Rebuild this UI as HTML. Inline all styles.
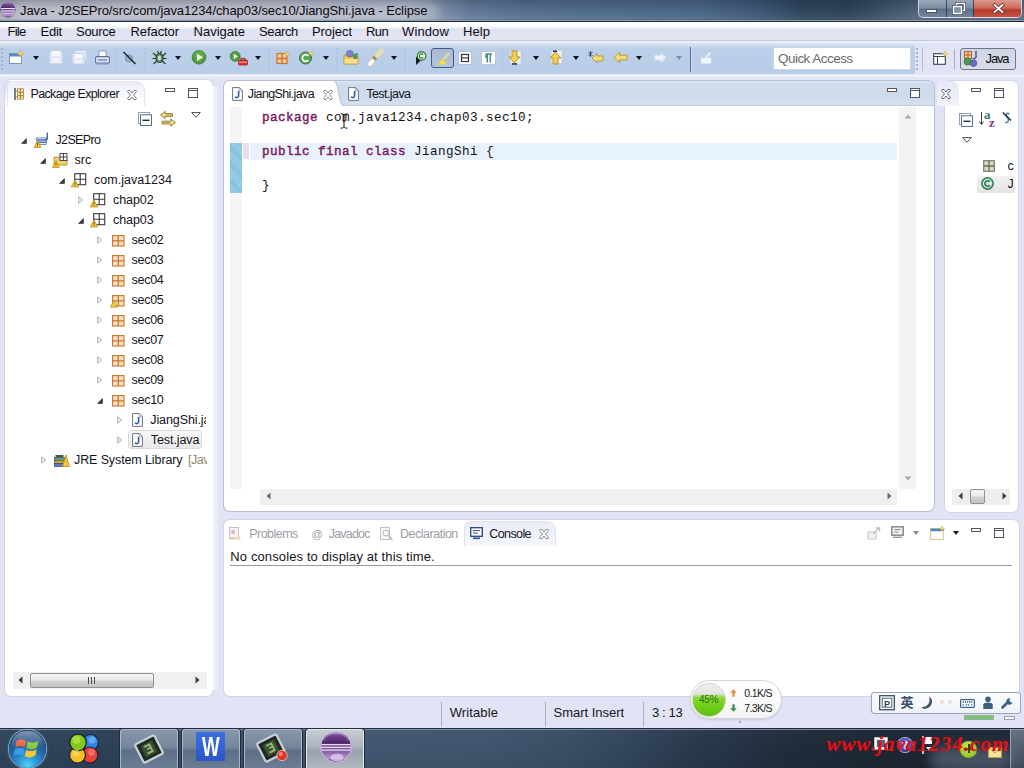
<!DOCTYPE html>
<html lang="en">
<head>
<meta charset="utf-8">
<title>Java - J2SEPro/src/com/java1234/chap03/sec10/JiangShi.java - Eclipse</title>
<style>
html,body{margin:0;padding:0;}
body{width:1024px;height:768px;overflow:hidden;position:relative;background:#e2e4f5;font-family:"Liberation Sans","Noto Sans CJK SC",sans-serif;font-size:12.5px;color:#111;}
.a{position:absolute;}
.t{position:absolute;white-space:pre;line-height:16px;height:16px;}
svg{position:absolute;overflow:visible;}
#titlebar{left:0;top:0;width:1024px;height:21px;background:linear-gradient(90deg,#abaebc 0,#a8acbc 300px,#9fa5b9 405px,#8391ab 437px,#647a98 470px,#56718f 520px,#506b8c 600px,#4b6788 700px,#3d5774 760px,#2f465e 800px,#2d435a 850px,#3a5068 880px,#4f6279 915px,#55677d 1024px);}
#titleshade{left:0;top:0;width:1024px;height:21px;background:linear-gradient(180deg,rgba(10,20,40,.22) 0,rgba(10,20,40,.08) 35%,rgba(255,255,255,.04) 75%,rgba(255,255,255,.08) 90%,rgba(0,0,0,.25) 100%);}
#menubar{left:0;top:20px;width:1024px;height:23px;background:linear-gradient(180deg,#8fa1b8 0,#8fa1b8 1px,#1f2a38 1px,#1f2a38 2px,#ffffff 2px,#fdfdfe 6px,#f0f1f9 8px,#dcdfee 9.5px,#e1e3f3 11px,#e3e5f5 19.5px,#c4cad9 20px,#c4cad9 21px,#e9f2fb 21px,#e4eef9 23px);}
#toolbar{left:0;top:43px;width:915px;height:31px;background:linear-gradient(180deg,#dde9f5 0,#c8d9ec 3px,#bccfe8 6px,#b8cde7 100%);}
.panel{position:absolute;background:#fff;border-radius:6px;box-shadow:0 0 0 1px rgba(185,190,215,.4);}
.kw{color:#7f0055;font-weight:bold;}
.tbtn{position:absolute;top:729px;width:58px;height:40px;box-sizing:border-box;border:1px solid rgba(190,203,220,.75);border-radius:3px 3px 0 0;background:linear-gradient(180deg,#8797ab 0,#75879c 45%,#5d6f87 55%,#6b7d95 100%);box-shadow:0 0 0 1px #1f2b3a;}
.sep{position:absolute;width:1px;background:#a3a6b8;}
.dd{position:absolute;width:0;height:0;border-left:3.5px solid transparent;border-right:3.5px solid transparent;border-top:4px solid #1a1a2a;}
</style>
</head>
<body>
<div class="a" id="titlebar"></div><div class="a" id="titleshade"></div>
<svg style="left:0px;top:2px" width="16" height="16" viewBox="0 0 16 16"><circle cx="8" cy="8" r="7.5" fill="#5b4a8a"/><circle cx="8" cy="8" r="7.5" fill="url(#eg)"/><rect x="1" y="6" width="14" height="1.2" fill="#e8e0f5"/><rect x="1" y="8.4" width="14" height="1.2" fill="#e8e0f5"/><rect x="1.5" y="10.8" width="13" height="1" fill="#d8cfee"/></svg>
<div class="a" style="left:14px;top:2px;width:425px;height:18px;border-radius:9px;background:rgba(255,255,255,.26);filter:blur(4px)"></div>
<div class="a" style="left:918px;top:0;width:104px;height:18px;border:1px solid rgba(225,232,242,.8);border-top:none;border-radius:0 0 5px 5px;box-sizing:border-box;overflow:hidden;background:linear-gradient(180deg,#9aa7ba 0,#7f8ea5 45%,#5e6f88 55%,#76869c 100%)"><div class="a" style="left:27px;top:0;width:1px;height:18px;background:rgba(30,40,55,.7)"></div><div class="a" style="left:54px;top:0;width:1px;height:18px;background:rgba(30,40,55,.7)"></div><div class="a" style="left:55px;top:0;width:49px;height:18px;background:linear-gradient(180deg,#dc9a8e 0,#cf6a58 45%,#b8372a 55%,#c9594a 100%)"></div><div class="a" style="left:7px;top:9px;width:11px;height:3px;background:#fff;border:1px solid #4a5568;box-sizing:border-box;height:4px"></div><svg style="left:33px;top:2px" width="14" height="12" viewBox="0 0 14 12"><rect x="4.5" y="1.5" width="8" height="7" fill="none" stroke="#4a5568" stroke-width="3"/><rect x="4.5" y="1.5" width="8" height="7" fill="none" stroke="#fff" stroke-width="1.4"/><rect x="1.5" y="4.5" width="8" height="7" fill="#7f8ea5" stroke="#4a5568" stroke-width="3"/><rect x="1.5" y="4.5" width="8" height="7" fill="#8090a6" stroke="#fff" stroke-width="1.4"/></svg><svg style="left:74px;top:3.5px" width="11" height="9" viewBox="0 0 14 11"><path d="M2 1 L12 10 M12 1 L2 10" stroke="#5a2a25" stroke-width="4.2" stroke-linecap="square"/><path d="M2 1 L12 10 M12 1 L2 10" stroke="#fff" stroke-width="2.4" stroke-linecap="square"/></svg></div>
<div class="a" id="menubar"></div>
<div class="a" id="toolbar"></div>
<div class="a" style="left:0;top:74px;width:1024px;height:4px;background:linear-gradient(180deg,#dfe6f4 0,#eef0fa 1px,#eceef9 2.5px,#e2e4f5 4px)"></div>
<div class="a" style="left:1px;top:48px;width:2px;height:22px;background:repeating-linear-gradient(180deg,#9fb2cf 0 2px,transparent 2px 4px)"></div>
<svg style="left:9px;top:50px" width="15" height="15" viewBox="0 0 15 15"><rect x="0.5" y="3.5" width="12" height="10" fill="#fff" stroke="#7f93b3"/><rect x="1" y="4" width="11" height="2.5" fill="#5f86c5"/><path d="M11.5 0 L12.5 2.5 L15 3.5 L12.5 4.5 L11.5 7 L10.5 4.5 L8 3.5 L10.5 2.5Z" fill="#f3d65a" stroke="#c9a63a" stroke-width=".4"/></svg>
<div class="dd" style="left:33px;top:56px;border-top-color:#10101c"></div>
<svg style="left:49px;top:50px" width="14" height="14" viewBox="0 0 14 14"><rect x="0.5" y="0.5" width="13" height="13" rx="1" fill="#dfe7f3" stroke="#c8d3e6"/><rect x="3" y="1" width="8" height="5" fill="#f6f8fc"/><rect x="3" y="8" width="8" height="5" fill="#eef2f9"/></svg>
<svg style="left:72px;top:50px" width="15" height="14" viewBox="0 0 15 14"><rect x="2.5" y="0.5" width="12" height="10" rx="1" fill="#e3eaf4" stroke="#c8d3e6"/><rect x="0.5" y="3.5" width="12" height="10" rx="1" fill="#dfe7f3" stroke="#c8d3e6"/><rect x="3" y="4" width="7" height="4" fill="#f6f8fc"/><rect x="3" y="9.5" width="7" height="4" fill="#eef2f9"/></svg>
<svg style="left:95px;top:50px" width="15" height="15" viewBox="0 0 15 15"><rect x="4" y="1" width="7" height="6" fill="#fff" stroke="#7a8fb8" stroke-width=".8"/><rect x="0.6" y="6.6" width="13.8" height="6.4" rx="1" fill="#dfe6f3" stroke="#5a6fa0" stroke-width="1.1"/><rect x="3" y="9" width="9" height="2" fill="#8ea3c9"/><rect x="1" y="13.5" width="13" height="1" fill="#7f93b3"/></svg>
<div class="a" style="left:115px;top:48px;width:2px;height:22px;background:repeating-linear-gradient(180deg,#b3c4e0 0 2px,transparent 2px 4px)"></div>
<svg style="left:121px;top:50px" width="16" height="15" viewBox="0 0 16 15"><circle cx="8" cy="8.5" r="3.6" fill="#9fb0c8" stroke="#7d8fa9" stroke-width="1"/><path d="M2.5 2 L14.5 14" stroke="#1c2230" stroke-width="1.5"/></svg>
<div class="a" style="left:144px;top:48px;width:2px;height:22px;background:repeating-linear-gradient(180deg,#b3c4e0 0 2px,transparent 2px 4px)"></div>
<svg style="left:152px;top:50px" width="15" height="15" viewBox="0 0 15 15"><ellipse cx="7.5" cy="8" rx="3.6" ry="4.4" fill="#5f8a62" stroke="#1f3a28" stroke-width="1"/><path d="M1 3 L4.5 6 M14 3 L10.5 6 M0.5 8.5 L4 8.5 M11 8.5 L14.5 8.5 M1.5 14 L4.8 11 M13.5 14 L10.2 11 M5.5 1 L6.8 3.8 M9.5 1 L8.2 3.8" stroke="#1f3a28" stroke-width="1.1" fill="none"/><ellipse cx="7.5" cy="8" rx="1.6" ry="2.4" fill="#cfe3c9"/></svg>
<div class="dd" style="left:175px;top:56px;border-top-color:#10101c"></div>
<svg style="left:192px;top:50px" width="14" height="15" viewBox="0 0 14 15"><circle cx="7" cy="7.3" r="6.8" fill="#4f9a3e" stroke="#3a7a30" stroke-width=".8"/><circle cx="7" cy="6" r="5" fill="#6db658" opacity=".6"/><path d="M5 3.5 L11 7.3 L5 11.2Z" fill="#e9f7dc"/></svg>
<div class="dd" style="left:215px;top:56px;border-top-color:#10101c"></div>
<svg style="left:230px;top:51px" width="18" height="15" viewBox="0 0 18 15"><circle cx="5.2" cy="5.4" r="5" fill="#4f9a3e" stroke="#3a7a30" stroke-width=".7"/><path d="M3.6 2.6 L8.2 5.4 L3.6 8.2Z" fill="#e9f7dc"/><rect x="8.5" y="9" width="9" height="5" rx=".8" fill="#d8342a" stroke="#9b1f1a" stroke-width=".7"/><rect x="11" y="7.4" width="4" height="2" fill="none" stroke="#9b1f1a" stroke-width=".9"/><rect x="9" y="10.6" width="8" height="1" fill="#f2b8a8"/></svg>
<div class="dd" style="left:255px;top:56px;border-top-color:#10101c"></div>
<div class="a" style="left:268px;top:48px;width:2px;height:22px;background:repeating-linear-gradient(180deg,#b3c4e0 0 2px,transparent 2px 4px)"></div>
<svg style="left:276px;top:51px" width="14" height="13" viewBox="0 0 14 13"><rect x="1" y="2.5" width="10" height="10" fill="#f4c89a" stroke="#c9762e" stroke-width="1.2"/><path d="M6 2.5 V12.5 M1 7.5 H11" stroke="#c9762e" stroke-width="1.3"/><path d="M11 0 L11.9 2 L14 2.8 L11.9 3.6 L11 5.8 L10.1 3.6 L8 2.8 L10.1 2Z" fill="#f6de6a" stroke="#c9a63a" stroke-width=".4"/></svg>
<svg style="left:299px;top:51px" width="15" height="14" viewBox="0 0 15 14"><circle cx="6.5" cy="7" r="6" fill="#58a05a" stroke="#2f7a3c" stroke-width="1"/><path d="M9.3 4.8 A3.4 3.4 0 1 0 9.3 9.2" fill="none" stroke="#eefaea" stroke-width="1.9"/><path d="M12 0 L12.8 1.8 L14.8 2.5 L12.8 3.2 L12 5 L11.2 3.2 L9.2 2.5 L11.2 1.8Z" fill="#f6de6a" stroke="#c9a63a" stroke-width=".4"/></svg>
<div class="dd" style="left:323px;top:56px;border-top-color:#10101c"></div>
<div class="a" style="left:336px;top:48px;width:2px;height:22px;background:repeating-linear-gradient(180deg,#b3c4e0 0 2px,transparent 2px 4px)"></div>
<svg style="left:343px;top:49px" width="16" height="16" viewBox="0 0 16 16"><path d="M1 6 H6 L7.5 7.5 H15 V15 H1Z" fill="#f0c94e" stroke="#b8922e" stroke-width=".9"/><path d="M1.5 10 H14.5 V14.5 H1.5Z" fill="#f8e08a"/><circle cx="6.8" cy="4.8" r="3.4" fill="#7d80c4" stroke="#5a5fa6" stroke-width=".6"/><path d="M10 5 L15 4 L14 10 L10.5 10Z" fill="#4f9a5a"/></svg>
<svg style="left:368px;top:50px" width="16" height="15" viewBox="0 0 16 15"><path d="M2 14 L11 3" stroke="#c9b48a" stroke-width="4.6" stroke-linecap="round"/><path d="M2 14 L4.5 11" stroke="#fff" stroke-width="4" stroke-linecap="round"/><path d="M9 5.5 L13.5 1" stroke="#e8dcb8" stroke-width="5.2" stroke-linecap="round"/><path d="M6 9 L7.5 7.3" stroke="#a8895a" stroke-width="4.4"/></svg>
<div class="dd" style="left:391px;top:56px;border-top-color:#10101c"></div>
<div class="a" style="left:404px;top:48px;width:2px;height:22px;background:repeating-linear-gradient(180deg,#b3c4e0 0 2px,transparent 2px 4px)"></div>
<svg style="left:413px;top:51px" width="14" height="15" viewBox="0 0 14 15"><circle cx="8.5" cy="5" r="4.3" fill="#eaf5e6" stroke="#3f8a4a" stroke-width="1.5"/><path d="M10.2 3.6 A2.2 2.2 0 1 0 10.2 6.4" fill="none" stroke="#2f7a3c" stroke-width="1.3"/><path d="M3 5.5 L7.5 10 L3 14Z" fill="#161c28"/><path d="M0.5 4.5 H4" stroke="#c5d2e6" stroke-width="1.4"/></svg>
<div class="a" style="left:431px;top:48px;width:23px;height:20px;box-sizing:border-box;border:1px solid #3d5c8e;border-radius:3px;background:linear-gradient(180deg,#a9b9cf 0,#b6c5da 100%)"></div>
<svg style="left:436px;top:51px" width="14" height="14" viewBox="0 0 14 14"><path d="M4 13 L13 2" stroke="#d9dfae" stroke-width="2.2"/><path d="M2 13.5 L6.5 7.5 L10.5 11 L8.5 13.5Z" fill="#ecdf4a"/><path d="M6.5 7.5 L10.5 11" stroke="#b9b98a" stroke-width="1"/></svg>
<svg style="left:458px;top:51px" width="14" height="14" viewBox="0 0 14 14"><rect x="0.5" y="0.5" width="13" height="13" fill="#fff" stroke="#8ea0bd" stroke-dasharray="1 1"/><rect x="3.5" y="3.5" width="7" height="7" fill="#fff" stroke="#2c3446" stroke-width="1.2"/><path d="M3.5 7 H10.5" stroke="#2c3446" stroke-width="1.2"/></svg>
<svg style="left:481px;top:51px" width="15" height="14" viewBox="0 0 15 14"><rect x="0.5" y="0.5" width="14" height="13" fill="#fff" stroke="#b9c6dc"/><path d="M6.3 3 V11.5 M9.3 3 V11.5 M4.5 3 H11" stroke="#4a8a86" stroke-width="1.5" fill="none"/><path d="M6.3 3 A2.2 2.2 0 0 0 6.3 7.4Z" fill="#4a8a86"/></svg>
<div class="a" style="left:501px;top:48px;width:2px;height:22px;background:repeating-linear-gradient(180deg,#b3c4e0 0 2px,transparent 2px 4px)"></div>
<svg style="left:507px;top:50px" width="15" height="15" viewBox="0 0 15 15"><rect x="3" y="1" width="11" height="13" fill="#eef1f7" stroke="#c2cde0" stroke-width=".8"/><path d="M5 1 H10 V7 H13 L7.5 13 L2 7 H5Z" fill="#f1cf52" stroke="#b98d2a" stroke-width=".9"/><rect x="5" y="13.2" width="5" height="1.5" fill="#2b3140"/></svg>
<div class="dd" style="left:533px;top:56px;border-top-color:#10101c"></div>
<svg style="left:548px;top:50px" width="15" height="15" viewBox="0 0 15 15"><rect x="3" y="0.5" width="11" height="13" fill="#eef1f7" stroke="#c2cde0" stroke-width=".8"/><path d="M5 14 H10 V8 H13 L7.5 2 L2 8 H5Z" fill="#f1cf52" stroke="#b98d2a" stroke-width=".9"/><rect x="5" y="0.5" width="4" height="1.5" fill="#2b3140"/></svg>
<div class="dd" style="left:573px;top:56px;border-top-color:#10101c"></div>
<svg style="left:588px;top:51px" width="16" height="13" viewBox="0 0 16 13"><path d="M4 7 L9 2.5 V5 H15 V10 H9 V12 Z" fill="#f3dc78" stroke="#b39436" stroke-width=".9"/><path d="M0.5 1 L4.5 5 M4.5 1 L0.5 5 M2.5 0 V6" stroke="#2b3140" stroke-width=".8"/></svg>
<svg style="left:613px;top:51px" width="15" height="13" viewBox="0 0 15 13"><path d="M0.8 6.5 L6.5 1.5 V4.2 H14 V9 H6.5 V11.7 Z" fill="#f3dc78" stroke="#b39436" stroke-width=".9"/></svg>
<div class="dd" style="left:636px;top:56px;border-top-color:#10101c"></div>
<svg style="left:654px;top:51px" width="13" height="13" viewBox="0 0 13 13"><path d="M12.3 6.5 L6.8 1.5 V4.2 H0.8 V9 H6.8 V11.7 Z" fill="#eef2f8" stroke="#d5deec" stroke-width=".8"/></svg>
<div class="dd" style="left:676px;top:56px;border-top-color:#7f8da6"></div>
<div class="a" style="left:690px;top:47px;width:1px;height:25px;background:#56688a"></div><div class="a" style="left:691px;top:47px;width:1px;height:25px;background:#d3def0"></div>
<svg style="left:700px;top:51px" width="12" height="13" viewBox="0 0 12 13"><path d="M1 7 H11 V12.5 H1Z" fill="#f2f5fa" stroke="#d9e1ee" stroke-width=".6"/><path d="M6 7 L10 1.5" stroke="#e6ecf5" stroke-width="2.4"/></svg>
<div class="a" style="left:773px;top:47px;width:138px;height:23px;box-sizing:border-box;border:1px solid #c9d6ea;background:#fff;border-radius:1px"></div>
<div class="a" style="left:916px;top:48px;width:2px;height:22px;background:repeating-linear-gradient(180deg,#9fb2d6 0 2px,transparent 2px 4px)"></div>
<div class="sep" style="left:922px;top:47px;height:24px;background:#b4b9cc"></div>
<svg style="left:933px;top:51px" width="15" height="14" viewBox="0 0 15 14"><rect x="0.7" y="2.7" width="11.6" height="10.6" fill="#fff" stroke="#3a4350" stroke-width="1.1"/><path d="M0.7 5.5 H12.3 M4.5 5.5 V13.3" stroke="#3a4350" stroke-width="1"/><path d="M12 0 L12.9 2 L15 2.8 L12.9 3.6 L12 5.8 L11.1 3.6 L9 2.8 L11.1 2Z" fill="#f6de6a" stroke="#c9a63a" stroke-width=".4"/></svg>
<div class="sep" style="left:954px;top:49px;height:20px;background:#a9aec2"></div>
<div class="a" style="left:960px;top:48px;width:56px;height:22px;box-sizing:border-box;border:1px solid #6f7888;border-radius:3px;background:linear-gradient(180deg,#cfd5e2 0,#d9dee9 100%)"></div>
<svg style="left:963px;top:50px" width="16" height="17" viewBox="0 0 16 17"><rect x="1.5" y="1.5" width="7" height="7" fill="#f4c89a" stroke="#b5612a" stroke-width="1"/><path d="M5 1.5 V8.5 M1.5 5 H8.5" stroke="#b5612a" stroke-width="1"/><path d="M13 1 V7 A2.5 2.5 0 0 1 9.5 8.5" fill="none" stroke="#4a5f9a" stroke-width="1.6"/><circle cx="4.6" cy="11.5" r="3.6" fill="#4f9a4f" stroke="#2f6f38" stroke-width=".7"/><circle cx="10.5" cy="13.2" r="3.3" fill="#6a6fc0" stroke="#474c96" stroke-width=".7"/></svg>
<div class="panel" style="left:5px;top:80px;width:207.5px;height:616px;"></div>
<div class="a" style="left:213px;top:86px;width:5px;height:604px;background:linear-gradient(90deg,#f1f2fb,#e8eaf7)"></div>
<div class="a" style="left:5px;top:80px;width:3.5px;height:22px;border-radius:6px 0 0 0;background:linear-gradient(180deg,#dcdeed 0,#e6e7f3 50%,#fff 100%)"></div>
<div class="a" style="left:7px;top:81px;width:138px;height:25px;box-sizing:border-box;border:1px solid #e4e6f3;border-bottom:none;border-radius:5px 9px 0 0;background:linear-gradient(180deg,#eaebf7 0,#f4f5fb 35%,#ffffff 80%)"></div>
<svg style="left:14px;top:88px" width="10" height="12" viewBox="0 0 10 12"><path d="M1 0 V12" stroke="#3b3b44" stroke-width="1.3"/><rect x="3.5" y="0.8" width="6" height="10.4" fill="#f3e3a8" stroke="#a98a3a" stroke-width=".8"/><path d="M3.5 4.3 H9.5 M3.5 7.7 H9.5 M6.5 0.8 V11.2 M1 3 H3.5 M1 9 H3.5" stroke="#8a6f2a" stroke-width=".8"/></svg>
<svg style="left:127px;top:89.5px" width="10" height="10" viewBox="0 0 10 10"><path d="M1 0.5 L3 0.5 L5 3 L7 0.5 L9 0.5 L9.5 1.5 L6.5 5 L9.5 8.5 L9 9.5 L7 9.5 L5 7 L3 9.5 L1 9.5 L0.5 8.5 L3.5 5 L0.5 1.5Z" fill="#fff" stroke="#6a6a74" stroke-width=".9" stroke-linejoin="round"/></svg>
<div class="a" style="left:165px;top:88px;width:10px;height:4px;box-sizing:border-box;border:1px solid #55555f;background:#fff"></div>
<div class="a" style="left:188px;top:88px;width:10px;height:10px;box-sizing:border-box;border:1px solid #55555f;background:linear-gradient(180deg,#fff 0,#fff 1px,#55555f 1px,#55555f 2px,#fff 2px)"></div>
<svg style="left:137.5px;top:112.3px" width="14" height="14" viewBox="0 0 14 14"><rect x="0.5" y="0.5" width="11" height="11" fill="#fff" stroke="#8da2bf"/><rect x="2.5" y="2.8" width="11" height="10.7" fill="#fff" stroke="#55708f"/><path d="M4.5 8.3 H11.5" stroke="#1e2c44" stroke-width="1.4"/></svg>
<svg style="left:159.5px;top:111px" width="16" height="16" viewBox="0 0 16 16"><path d="M0.6 4 L5.2 0.4 V2.6 H12.5 V5.4 H5.2 V7.6Z" fill="#f0dc82" stroke="#7a6c22" stroke-width=".8"/><path d="M15.4 11.6 L10.8 8 V10.2 H2 V13 H10.8 V15.2Z" fill="#f0dc82" stroke="#7a6c22" stroke-width=".8"/><path d="M6 4 H12 M3 11.6 H10" stroke="#8a7c32" stroke-width=".6"/></svg>
<svg style="left:191px;top:112px" width="10" height="6" viewBox="0 0 10 6"><path d="M0.7 0.6 H9.3 L5 5.3Z" fill="#fff" stroke="#4b4b55" stroke-width="1"/></svg>
<div class="a" style="left:6px;top:128px;width:200.5px;height:545px;overflow:hidden">
<svg style="left:15.3px;top:10.1px" width="6" height="6" viewBox="0 0 6 6"><path d="M5.4 0.6 V5.4 H0.6Z" fill="#3c3c44" stroke="#2a2a34" stroke-width=".7"/></svg>
<svg style="left:28.0px;top:4.3px" width="16" height="16" viewBox="0 0 16 16"><path d="M2 6 H13.5 L12 12.5 H3.5Z" fill="#e9eef8" stroke="#6d82a8" stroke-width=".9"/><path d="M3 8 H13 M3.3 10.2 H12.6" stroke="#4f74b8" stroke-width="1.4"/><path d="M13.3 0.5 V6 A2 2 0 0 1 11 7.5" fill="none" stroke="#3b5ea8" stroke-width="1.3"/><path d="M3.5 8.5 L7 15.5 H0Z" fill="#f3c93a" stroke="#b98d1a" stroke-width=".7"/><path d="M3.5 11 V13.2 M3.5 14 V14.7" stroke="#5a3c00" stroke-width=".9"/></svg>
<svg style="left:34.3px;top:30.1px" width="6" height="6" viewBox="0 0 6 6"><path d="M5.4 0.6 V5.4 H0.6Z" fill="#3c3c44" stroke="#2a2a34" stroke-width=".7"/></svg>
<svg style="left:46.0px;top:24.3px" width="17" height="16" viewBox="0 0 17 16"><path d="M2 5 H7 L8.5 6.5 H15 V13 H2Z" fill="#f0cf72" stroke="#b8922e" stroke-width=".9"/><rect x="8" y="1.5" width="7" height="7" fill="#fff" stroke="#3a3a40" stroke-width=".9"/><path d="M11.5 1.5 V8.5 M8 5 H15" stroke="#3a3a40" stroke-width=".9"/><path d="M4 8.5 L7.5 15.5 H0.5Z" fill="#f3c93a" stroke="#b98d1a" stroke-width=".7"/><path d="M4 11 V13.2 M4 14 V14.7" stroke="#5a3c00" stroke-width=".9"/></svg>
<svg style="left:53.3px;top:50.1px" width="6" height="6" viewBox="0 0 6 6"><path d="M5.4 0.6 V5.4 H0.6Z" fill="#3c3c44" stroke="#2a2a34" stroke-width=".7"/></svg>
<svg style="left:65.0px;top:45.3px" width="16" height="15" viewBox="0 0 16 15"><rect x="3.7" y="0.7" width="11" height="11" fill="#fff" stroke="#3a3a40" stroke-width="1.1"/><path d="M9.2 0.7 V11.7 M3.7 6.2 H14.7" stroke="#3a3a40" stroke-width="1.1"/><path d="M4 6.8 L7.8 14 H0.2Z" fill="#f3c93a" stroke="#b98d1a" stroke-width=".7"/><path d="M4 9.3 V11.6 M4 12.3 V13" stroke="#5a3c00" stroke-width=".9"/></svg>
<svg style="left:72.0px;top:68.3px" width="6" height="8" viewBox="0 0 6 8"><path d="M0.7 0.8 L4.8 4 L0.7 7.2Z" fill="#f4f4f6" stroke="#adadb6" stroke-width="1"/></svg>
<svg style="left:84.0px;top:65.3px" width="16" height="15" viewBox="0 0 16 15"><rect x="3.7" y="0.7" width="11" height="11" fill="#fff" stroke="#3a3a40" stroke-width="1.1"/><path d="M9.2 0.7 V11.7 M3.7 6.2 H14.7" stroke="#3a3a40" stroke-width="1.1"/><path d="M4 6.8 L7.8 14 H0.2Z" fill="#f3c93a" stroke="#b98d1a" stroke-width=".7"/><path d="M4 9.3 V11.6 M4 12.3 V13" stroke="#5a3c00" stroke-width=".9"/></svg>
<svg style="left:72.3px;top:90.1px" width="6" height="6" viewBox="0 0 6 6"><path d="M5.4 0.6 V5.4 H0.6Z" fill="#3c3c44" stroke="#2a2a34" stroke-width=".7"/></svg>
<svg style="left:84.0px;top:85.3px" width="16" height="15" viewBox="0 0 16 15"><rect x="3.7" y="0.7" width="11" height="11" fill="#fff" stroke="#3a3a40" stroke-width="1.1"/><path d="M9.2 0.7 V11.7 M3.7 6.2 H14.7" stroke="#3a3a40" stroke-width="1.1"/><path d="M4 6.8 L7.8 14 H0.2Z" fill="#f3c93a" stroke="#b98d1a" stroke-width=".7"/><path d="M4 9.3 V11.6 M4 12.3 V13" stroke="#5a3c00" stroke-width=".9"/></svg>
<svg style="left:91.0px;top:108.3px" width="6" height="8" viewBox="0 0 6 8"><path d="M0.7 0.8 L4.8 4 L0.7 7.2Z" fill="#f4f4f6" stroke="#adadb6" stroke-width="1"/></svg>
<svg style="left:106.2px;top:106.5px" width="13" height="12" viewBox="0 0 13 12"><rect x="0.6" y="0.6" width="11.4" height="10.4" fill="#f9dfc2" stroke="#c8742c" stroke-width="1.1"/><path d="M6.3 0.6 V11 M0.6 5.8 H12" stroke="#c8742c" stroke-width="1.2"/></svg>
<svg style="left:91.0px;top:128.3px" width="6" height="8" viewBox="0 0 6 8"><path d="M0.7 0.8 L4.8 4 L0.7 7.2Z" fill="#f4f4f6" stroke="#adadb6" stroke-width="1"/></svg>
<svg style="left:106.2px;top:126.5px" width="13" height="12" viewBox="0 0 13 12"><rect x="0.6" y="0.6" width="11.4" height="10.4" fill="#f9dfc2" stroke="#c8742c" stroke-width="1.1"/><path d="M6.3 0.6 V11 M0.6 5.8 H12" stroke="#c8742c" stroke-width="1.2"/></svg>
<svg style="left:91.0px;top:148.3px" width="6" height="8" viewBox="0 0 6 8"><path d="M0.7 0.8 L4.8 4 L0.7 7.2Z" fill="#f4f4f6" stroke="#adadb6" stroke-width="1"/></svg>
<svg style="left:106.2px;top:146.5px" width="13" height="12" viewBox="0 0 13 12"><rect x="0.6" y="0.6" width="11.4" height="10.4" fill="#f9dfc2" stroke="#c8742c" stroke-width="1.1"/><path d="M6.3 0.6 V11 M0.6 5.8 H12" stroke="#c8742c" stroke-width="1.2"/></svg>
<svg style="left:91.0px;top:168.3px" width="6" height="8" viewBox="0 0 6 8"><path d="M0.7 0.8 L4.8 4 L0.7 7.2Z" fill="#f4f4f6" stroke="#adadb6" stroke-width="1"/></svg>
<svg style="left:106.2px;top:166.5px" width="13" height="13" viewBox="0 0 13 13"><rect x="0.6" y="0.6" width="11.4" height="10.4" fill="#f9dfc2" stroke="#c8742c" stroke-width="1.1"/><path d="M6.3 0.6 V11 M0.6 5.8 H12" stroke="#c8742c" stroke-width="1.2"/><path d="M1.8 5.2 L5.2 12.2 H-1.6Z" fill="#f3c93a" stroke="#b98d1a" stroke-width=".7"/></svg>
<svg style="left:91.0px;top:188.3px" width="6" height="8" viewBox="0 0 6 8"><path d="M0.7 0.8 L4.8 4 L0.7 7.2Z" fill="#f4f4f6" stroke="#adadb6" stroke-width="1"/></svg>
<svg style="left:106.2px;top:186.5px" width="13" height="12" viewBox="0 0 13 12"><rect x="0.6" y="0.6" width="11.4" height="10.4" fill="#f9dfc2" stroke="#c8742c" stroke-width="1.1"/><path d="M6.3 0.6 V11 M0.6 5.8 H12" stroke="#c8742c" stroke-width="1.2"/></svg>
<svg style="left:91.0px;top:208.3px" width="6" height="8" viewBox="0 0 6 8"><path d="M0.7 0.8 L4.8 4 L0.7 7.2Z" fill="#f4f4f6" stroke="#adadb6" stroke-width="1"/></svg>
<svg style="left:106.2px;top:206.5px" width="13" height="12" viewBox="0 0 13 12"><rect x="0.6" y="0.6" width="11.4" height="10.4" fill="#f9dfc2" stroke="#c8742c" stroke-width="1.1"/><path d="M6.3 0.6 V11 M0.6 5.8 H12" stroke="#c8742c" stroke-width="1.2"/></svg>
<svg style="left:91.0px;top:228.3px" width="6" height="8" viewBox="0 0 6 8"><path d="M0.7 0.8 L4.8 4 L0.7 7.2Z" fill="#f4f4f6" stroke="#adadb6" stroke-width="1"/></svg>
<svg style="left:106.2px;top:226.5px" width="13" height="12" viewBox="0 0 13 12"><rect x="0.6" y="0.6" width="11.4" height="10.4" fill="#f9dfc2" stroke="#c8742c" stroke-width="1.1"/><path d="M6.3 0.6 V11 M0.6 5.8 H12" stroke="#c8742c" stroke-width="1.2"/></svg>
<svg style="left:91.0px;top:248.3px" width="6" height="8" viewBox="0 0 6 8"><path d="M0.7 0.8 L4.8 4 L0.7 7.2Z" fill="#f4f4f6" stroke="#adadb6" stroke-width="1"/></svg>
<svg style="left:106.2px;top:246.5px" width="13" height="12" viewBox="0 0 13 12"><rect x="0.6" y="0.6" width="11.4" height="10.4" fill="#f9dfc2" stroke="#c8742c" stroke-width="1.1"/><path d="M6.3 0.6 V11 M0.6 5.8 H12" stroke="#c8742c" stroke-width="1.2"/></svg>
<svg style="left:91.3px;top:270.1px" width="6" height="6" viewBox="0 0 6 6"><path d="M5.4 0.6 V5.4 H0.6Z" fill="#3c3c44" stroke="#2a2a34" stroke-width=".7"/></svg>
<svg style="left:106.2px;top:266.5px" width="13" height="12" viewBox="0 0 13 12"><rect x="0.6" y="0.6" width="11.4" height="10.4" fill="#f9dfc2" stroke="#c8742c" stroke-width="1.1"/><path d="M6.3 0.6 V11 M0.6 5.8 H12" stroke="#c8742c" stroke-width="1.2"/></svg>
<svg style="left:110.5px;top:288.3px" width="6" height="8" viewBox="0 0 6 8"><path d="M0.7 0.8 L4.8 4 L0.7 7.2Z" fill="#f4f4f6" stroke="#adadb6" stroke-width="1"/></svg>
<svg style="left:126px;top:285.3px" width="11" height="14" viewBox="0 0 11 14"><path d="M0.6 0.6 H7.5 L10.4 3.5 V13.4 H0.6Z" fill="#fff" stroke="#6b7487" stroke-width="1"/><path d="M7.2 0.8 V3.8 H10.2" fill="none" stroke="#8d95a6" stroke-width=".8"/><path d="M6.6 4 V9 A1.8 1.8 0 0 1 3.2 9.6" fill="none" stroke="#2c5aa8" stroke-width="1.6"/></svg>
<div class="a" style="left:121.5px;top:302px;width:74px;height:19px;box-sizing:border-box;border:1px solid #dadada;border-radius:3px;background:linear-gradient(180deg,#f8f8f8,#e9e9e9)"></div>
<svg style="left:110.5px;top:308.3px" width="6" height="8" viewBox="0 0 6 8"><path d="M0.7 0.8 L4.8 4 L0.7 7.2Z" fill="#f4f4f6" stroke="#adadb6" stroke-width="1"/></svg>
<svg style="left:126px;top:305.3px" width="11" height="14" viewBox="0 0 11 14"><path d="M0.6 0.6 H7.5 L10.4 3.5 V13.4 H0.6Z" fill="#fff" stroke="#6b7487" stroke-width="1"/><path d="M7.2 0.8 V3.8 H10.2" fill="none" stroke="#8d95a6" stroke-width=".8"/><path d="M6.6 4 V9 A1.8 1.8 0 0 1 3.2 9.6" fill="none" stroke="#2c5aa8" stroke-width="1.6"/></svg>
<svg style="left:34.5px;top:328.3px" width="6" height="8" viewBox="0 0 6 8"><path d="M0.7 0.8 L4.8 4 L0.7 7.2Z" fill="#f4f4f6" stroke="#adadb6" stroke-width="1"/></svg>
<svg style="left:47.5px;top:325.3px" width="16" height="14" viewBox="0 0 16 14"><rect x="0.5" y="4.5" width="10" height="3" fill="#5f9a8a" stroke="#2f5a50" stroke-width=".7"/><rect x="0.5" y="7.5" width="10" height="3" fill="#c8a24a" stroke="#7a5a1a" stroke-width=".7"/><rect x="0.5" y="10.5" width="10" height="3" fill="#5f7fb8" stroke="#2f4a80" stroke-width=".7"/><rect x="1.5" y="2" width="8" height="2.5" fill="#3a5a50"/><path d="M12 2 L15.5 13.5 H8.5Z" fill="#f3c93a" stroke="#b98d1a" stroke-width=".8"/></svg>
</div>
<div class="a" style="left:13px;top:672px;width:194px;height:17px;background:#f0f0f0"></div>
<div class="a" style="left:30px;top:673px;width:124px;height:15px;box-sizing:border-box;border:1px solid #8f8f8f;border-radius:2px;background:linear-gradient(180deg,#f6f6f6 0,#e9e9e9 45%,#d2d2d2 55%,#c4c4c4 100%)"></div>
<div class="a" style="left:88px;top:677px;width:7px;height:7px;background:repeating-linear-gradient(90deg,#4a4a4a 0 1px,transparent 1px 3px)"></div>
<svg style="left:18px;top:676px" width="5" height="8" viewBox="0 0 5 8"><path d="M4.5 0.5 L0.5 4 L4.5 7.5Z" fill="#3a3a3a"/></svg>
<svg style="left:195px;top:676px" width="5" height="8" viewBox="0 0 5 8"><path d="M0.5 0.5 L4.5 4 L0.5 7.5Z" fill="#3a3a3a"/></svg>
<div class="panel" style="left:224px;top:81px;width:710px;height:430px;box-shadow:0 0 0 1px rgba(150,155,185,.55)"></div>
<div class="a" style="left:224px;top:81px;width:710px;height:24px;border-radius:6px 6px 0 0;background:linear-gradient(180deg,#e4ecf6 0,#d2ddeb 2px,#cddae9 55%,#d5e0ee 100%)"></div>
<div class="a" style="left:224px;top:105px;width:710px;height:1px;background:#c3cbd8"></div>
<div class="a" style="left:224px;top:81px;width:110px;height:25px;background:#fff;border-radius:6px 0 0 0"></div>
<svg style="left:330px;top:81px" width="14" height="25" viewBox="0 0 14 25"><path d="M0 0 H4 C9 0 8 25 14 25 H0Z" fill="#fff"/><path d="M4 0 C9 0 8 25 14 25" fill="none" stroke="#aebbd2" stroke-width=".8"/></svg>
<svg style="left:232px;top:87px" width="11" height="14" viewBox="0 0 11 14"><path d="M0.6 0.6 H7.5 L10.4 3.5 V13.4 H0.6Z" fill="#fff" stroke="#6b7487" stroke-width="1"/><path d="M7.2 0.8 V3.8 H10.2" fill="none" stroke="#8d95a6" stroke-width=".8"/><path d="M6.6 4 V9 A1.8 1.8 0 0 1 3.2 9.6" fill="none" stroke="#2c5aa8" stroke-width="1.6"/></svg>
<svg style="left:323px;top:89.5px" width="10" height="10" viewBox="0 0 10 10"><path d="M1 0.5 L3 0.5 L5 3 L7 0.5 L9 0.5 L9.5 1.5 L6.5 5 L9.5 8.5 L9 9.5 L7 9.5 L5 7 L3 9.5 L1 9.5 L0.5 8.5 L3.5 5 L0.5 1.5Z" fill="#fff" stroke="#7a7a84" stroke-width=".9" stroke-linejoin="round"/></svg>
<svg style="left:348px;top:87px" width="11" height="14" viewBox="0 0 11 14"><path d="M0.6 0.6 H7.5 L10.4 3.5 V13.4 H0.6Z" fill="#fff" stroke="#6b7487" stroke-width="1"/><path d="M7.2 0.8 V3.8 H10.2" fill="none" stroke="#8d95a6" stroke-width=".8"/><path d="M6.6 4 V9 A1.8 1.8 0 0 1 3.2 9.6" fill="none" stroke="#2c5aa8" stroke-width="1.6"/></svg>
<div class="a" style="left:887px;top:88px;width:10px;height:4px;box-sizing:border-box;border:1px solid #55555f;background:#fff"></div>
<div class="a" style="left:910px;top:88px;width:10px;height:10px;box-sizing:border-box;border:1px solid #55555f;background:linear-gradient(180deg,#fff 0,#fff 1px,#55555f 1px,#55555f 2px,#fff 2px)"></div>
<div class="a" style="left:230px;top:107px;width:12px;height:382px;background:#f5f5f8"></div>
<div class="a" style="left:250px;top:143px;width:647px;height:17px;background:#e8f2fe"></div>
<div class="a" style="left:230px;top:143px;width:12px;height:50px;background:#7cbedb;background-image:repeating-linear-gradient(45deg,rgba(255,255,255,.28) 0 1px,transparent 1px 2px)"></div>
<div class="a" style="left:243px;top:143px;width:6px;height:16px;background:#ebdcea"></div>
<div class="a" style="left:899px;top:107px;width:17px;height:382px;background:#f3f3f3"></div>
<svg style="left:904px;top:114px" width="8" height="5" viewBox="0 0 8 5"><path d="M0.5 4.5 L4 0.5 L7.5 4.5Z" fill="#a8a8a8"/></svg>
<svg style="left:904px;top:476px" width="8" height="5" viewBox="0 0 8 5"><path d="M0.5 0.5 L4 4.5 L7.5 0.5Z" fill="#a8a8a8"/></svg>
<div class="a" style="left:260px;top:489px;width:637px;height:16px;background:#f0f0f0"></div>
<svg style="left:266px;top:492px" width="5" height="8" viewBox="0 0 5 8"><path d="M4.5 0.5 L0.5 4 L4.5 7.5Z" fill="#6a6a6a"/></svg>
<svg style="left:887px;top:492px" width="5" height="8" viewBox="0 0 5 8"><path d="M0.5 0.5 L4.5 4 L0.5 7.5Z" fill="#6a6a6a"/></svg>
<div class="panel" style="left:945px;top:81px;width:73px;height:431px;"></div>
<div class="a" style="left:937px;top:81px;width:22px;height:25px;border-radius:5px 8px 0 0;background:linear-gradient(180deg,#e6e8f6,#f2f3fb)"></div>
<svg style="left:941px;top:89px" width="10" height="10" viewBox="0 0 10 10"><path d="M1 0.5 L3 0.5 L5 3 L7 0.5 L9 0.5 L9.5 1.5 L6.5 5 L9.5 8.5 L9 9.5 L7 9.5 L5 7 L3 9.5 L1 9.5 L0.5 8.5 L3.5 5 L0.5 1.5Z" fill="#fff" stroke="#5a5a64" stroke-width=".9" stroke-linejoin="round"/></svg>
<div class="a" style="left:971px;top:88px;width:10px;height:4px;box-sizing:border-box;border:1px solid #55555f;background:#fff"></div>
<div class="a" style="left:994px;top:88px;width:10px;height:10px;box-sizing:border-box;border:1px solid #55555f;background:linear-gradient(180deg,#fff 0,#fff 1px,#55555f 1px,#55555f 2px,#fff 2px)"></div>
<svg style="left:958.5px;top:112.5px" width="14" height="14" viewBox="0 0 14 14"><rect x="0.5" y="0.5" width="11" height="11" fill="#fff" stroke="#8da2bf"/><rect x="2.5" y="2.8" width="11" height="10.7" fill="#fff" stroke="#55708f"/><path d="M4.5 8.3 H11.5" stroke="#1e2c44" stroke-width="1.4"/></svg>
<svg style="left:979px;top:111px" width="17" height="16" viewBox="0 0 17 16"><path d="M2.5 1 V13 M0.5 10.5 L2.5 13.5 L4.5 10.5" fill="none" stroke="#3a3a44" stroke-width="1"/><text x="5" y="8" font-family="Liberation Serif,serif" font-weight="bold" font-size="13" fill="#3f6f80">a</text><text x="10" y="15.5" font-family="Liberation Serif,serif" font-weight="bold" font-size="13" fill="#8a3a6a">z</text></svg>
<svg style="left:1002px;top:112px" width="10" height="13" viewBox="0 0 10 13"><path d="M7.5 2 C5 0.5 3 2.5 5 5 C7.5 7.5 7 11 3 10.5" fill="none" stroke="#4a8c9c" stroke-width="1.6"/><path d="M0.8 0.5 L9 8.5" stroke="#1c2a4a" stroke-width="1.4"/></svg>
<svg style="left:962px;top:137px" width="10" height="6" viewBox="0 0 10 6"><path d="M0.7 0.6 H9.3 L5 5.3Z" fill="#fff" stroke="#4b4b55" stroke-width="1"/></svg>
<svg style="left:982.5px;top:159.5px" width="12" height="12" viewBox="0 0 12 12"><rect x="0.7" y="0.7" width="10.6" height="10.6" fill="#d9d9c4" stroke="#7b7b66" stroke-width="1.2"/><path d="M6 0.7 V11.3 M0.7 6 H11.3" stroke="#6b6b58" stroke-width="1.3"/></svg>
<div class="a" style="left:977px;top:176px;width:38px;height:17px;background:linear-gradient(180deg,#f1f1f1,#e4e4e4);border-radius:2px"></div>
<svg style="left:980.5px;top:177px" width="13" height="13" viewBox="0 0 13 13"><circle cx="6.5" cy="6.5" r="5.6" fill="#d4efe0" stroke="#3f7f5e" stroke-width="1.7"/><path d="M8.8 4.7 A2.8 2.8 0 1 0 8.8 8.3" fill="none" stroke="#2f6f4e" stroke-width="1.6"/></svg>
<div class="a" style="left:952px;top:489px;width:58px;height:16px;background:#eeeeee"></div>
<div class="a" style="left:970px;top:489px;width:15px;height:15px;box-sizing:border-box;border:1px solid #8f8f8f;border-radius:2px;background:linear-gradient(180deg,#f6f6f6 0,#e9e9e9 45%,#d2d2d2 55%,#c4c4c4 100%)"></div>
<svg style="left:958px;top:492px" width="5" height="8" viewBox="0 0 5 8"><path d="M4.5 0.5 L0.5 4 L4.5 7.5Z" fill="#3a3a3a"/></svg>
<svg style="left:1002px;top:492px" width="5" height="8" viewBox="0 0 5 8"><path d="M0.5 0.5 L4.5 4 L0.5 7.5Z" fill="#3a3a3a"/></svg>
<div class="panel" style="left:224px;top:520px;width:795px;height:176px;"></div>
<div class="a" style="left:464px;top:521px;width:92px;height:25px;box-sizing:border-box;border:1px solid #dfe2f1;border-bottom:none;border-radius:7px 9px 0 0;background:linear-gradient(180deg,#e9ebf8 0,#f6f7fd 100%)"></div>
<svg style="left:229px;top:527px" width="13" height="13" viewBox="0 0 13 13"><rect x="0.5" y="0.5" width="9" height="11" fill="#f3f3f3" stroke="#c4c4c4"/><circle cx="4" cy="5" r="2" fill="#e0b8b0"/><path d="M7 12.5 L9.5 8 L12 12.5Z" fill="#ecd9a0"/><rect x="1" y="10" width="5" height="2.5" fill="#e8c8b8"/></svg>
<svg style="left:380px;top:527px" width="14" height="14" viewBox="0 0 14 14"><rect x="0.5" y="0.5" width="9" height="12" fill="#f8f8f8" stroke="#c0c0c8"/><circle cx="6" cy="6" r="3" fill="none" stroke="#b4b4bc" stroke-width="1"/><path d="M8.5 9 L12.5 13" stroke="#b4b4bc" stroke-width="1.5"/></svg>
<svg style="left:470px;top:527px" width="13" height="13" viewBox="0 0 13 13"><rect x="0.7" y="0.7" width="11.6" height="8.6" fill="#fff" stroke="#2f4f8a" stroke-width="1.4"/><path d="M3 3.5 H10 M3 6 H8" stroke="#2f4f8a" stroke-width="1.1"/><rect x="3" y="10.5" width="7" height="1.6" fill="#2f4f8a"/></svg>
<svg style="left:539px;top:529px" width="10" height="10" viewBox="0 0 10 10"><path d="M1 0.5 L3 0.5 L5 3 L7 0.5 L9 0.5 L9.5 1.5 L6.5 5 L9.5 8.5 L9 9.5 L7 9.5 L5 7 L3 9.5 L1 9.5 L0.5 8.5 L3.5 5 L0.5 1.5Z" fill="#fff" stroke="#7a7a84" stroke-width=".9" stroke-linejoin="round"/></svg>
<div class="a" style="left:230px;top:564.5px;width:782px;height:1px;background:#9a9a9a"></div>
<svg style="left:867px;top:527px" width="14" height="13" viewBox="0 0 14 13"><path d="M1 5 H9 V12 H1Z" fill="#f2f2f2" stroke="#c6c6c6" stroke-width="1"/><path d="M6 7 L12 1 M9 1 H12.5 V4.5" fill="none" stroke="#c0c0c0" stroke-width="1.4"/></svg>
<svg style="left:891px;top:526px" width="13" height="13" viewBox="0 0 13 13"><rect x="0.8" y="0.8" width="11.4" height="8.4" fill="#f1f1f1" stroke="#8a8a8a" stroke-width="1.5"/><path d="M3.5 3.5 H9.5 M3.5 6 H7.5" stroke="#8a8a8a" stroke-width="1"/><rect x="2" y="10.6" width="9" height="1.4" fill="#9a9a9a"/></svg>
<div class="dd" style="left:913px;top:531px;border-top-color:#8a8a8a"></div>
<svg style="left:930px;top:527px" width="15" height="13" viewBox="0 0 15 13"><rect x="0.6" y="1.6" width="12.8" height="10.8" fill="#fff" stroke="#e3c690" stroke-width="1"/><rect x="0.6" y="1.6" width="12.8" height="2.6" fill="#4f86b8"/><path d="M12 -1 L12.8 0.8 L14.8 1.5 L12.8 2.2 L12 4 L11.2 2.2 L9.2 1.5 L11.2 0.8Z" fill="#f6de6a" stroke="#c9a63a" stroke-width=".4"/></svg>
<div class="dd" style="left:953px;top:531px;border-top-color:#1a1a1a"></div>
<div class="a" style="left:971px;top:528px;width:10px;height:4px;box-sizing:border-box;border:1px solid #55555f;background:#fff"></div>
<div class="a" style="left:994px;top:528px;width:10px;height:10px;box-sizing:border-box;border:1px solid #55555f;background:linear-gradient(180deg,#fff 0,#fff 1px,#55555f 1px,#55555f 2px,#fff 2px)"></div>
<div class="sep" style="left:441px;top:702px;height:25px;background:#adb0c2"></div>
<div class="sep" style="left:545px;top:702px;height:25px;background:#adb0c2"></div>
<div class="sep" style="left:643px;top:702px;height:25px;background:#adb0c2"></div>
<div class="a" style="left:690px;top:680px;width:92px;height:39px;box-sizing:border-box;border:1px solid #d2d2d6;border-radius:20px;background:linear-gradient(180deg,#ffffff,#f4f4f4);box-shadow:0 1px 2px rgba(0,0,0,.12)"></div>
<div class="a" style="left:691.5px;top:682.5px;width:34px;height:34px;box-sizing:border-box;border:1.5px solid #cfd8c8;border-radius:50%;background:linear-gradient(180deg,#efefef 0,#e4e4e4 30%,#8ddc3c 42%,#74d21e 60%,#5fbf12 100%)"></div>
<svg style="left:730px;top:688.5px" width="7" height="8" viewBox="0 0 7 8"><path d="M3.5 0.3 L6.7 3.8 H4.6 V7.7 H2.4 V3.8 H0.3Z" fill="#e08a3a"/></svg>
<svg style="left:730px;top:703.5px" width="7" height="8" viewBox="0 0 7 8"><path d="M3.5 7.7 L6.7 4.2 H4.6 V0.3 H2.4 V4.2 H0.3Z" fill="#2f8f45"/></svg>
<div class="a" style="left:738.5px;top:720.5px;width:2px;height:2px;border-radius:1px;background:#8c8ca0"></div>
<div class="a" style="left:871px;top:691.5px;width:150px;height:22px;box-sizing:border-box;border:1px solid #93a4bb;border-radius:3px;background:linear-gradient(180deg,#fbfcfe,#eef2f8)"></div>
<svg style="left:879px;top:695px" width="16" height="15.5" viewBox="0 0 16 15.5"><rect x="0.7" y="0.7" width="14.6" height="14" fill="#fff" stroke="#3d4f66" stroke-width="1.3"/><rect x="3.2" y="3.2" width="9.6" height="9" fill="none" stroke="#3d4f66" stroke-width=".9"/><text x="5" y="11.5" font-family="Liberation Sans,sans-serif" font-weight="bold" font-size="9" fill="#2d3f56">P</text></svg>
<svg style="left:920.5px;top:696px" width="13" height="14" viewBox="0 0 13 14"><path d="M8 0.5 C13 3 12 11.5 4.5 12.8 C2.5 13 1 12 0.5 11 C6 11.5 10 7 8 0.5Z" fill="#44566e"/></svg>
<div class="a" style="left:940px;top:700px;width:4px;height:4px;border-radius:2px;background:#f6dcc4"></div><div class="a" style="left:948px;top:700px;width:4px;height:4px;border-radius:2px;background:#f6dcc4"></div>
<svg style="left:960px;top:698.5px" width="15" height="9" viewBox="0 0 15 9"><rect x="0.6" y="0.6" width="13.8" height="7.8" rx="1" fill="#fff" stroke="#3d5f8f" stroke-width="1.2"/><path d="M2.5 3 H12.5 M2.5 5.8 H4 M5.5 5.8 H10 M11.3 5.8 H12.5" stroke="#3d5f8f" stroke-width="1.3" stroke-dasharray="1.4 .8"/></svg>
<svg style="left:983px;top:696px" width="10" height="13" viewBox="0 0 10 13"><circle cx="5" cy="3.3" r="2.8" fill="#3f5f80"/><path d="M0.3 13 V8.5 C0.3 5.8 9.7 5.8 9.7 8.5 V13Z" fill="#3f5f80"/></svg>
<svg style="left:1001px;top:696px" width="13" height="13" viewBox="0 0 13 13"><path d="M1.5 11.5 L7.5 5.5" stroke="#3f5f80" stroke-width="2.6" stroke-linecap="round"/><path d="M7 2.5 A3.3 3.3 0 1 0 11.5 7 L9.3 6 L8.2 4.2 L9.5 2 Z" fill="#3f5f80"/></svg>
<div class="a" style="left:964px;top:715px;width:30px;height:5px;box-sizing:border-box;border:1px solid #9ab09a;background:#74c774"></div>
<div class="a" style="left:1004px;top:715.5px;width:11px;height:4px;box-sizing:border-box;border:1px solid #9aa0b0;background:#f4f4f8"></div>
<div class="a" style="left:0;top:728px;width:1024px;height:40px;background:linear-gradient(90deg,#30445a 0,#2c4056 110px,#3a4f68 200px,#42566f 360px,#40546d 480px,#3a4e66 560px,#33465d 620px,#28384c 700px,#202c3b 790px,#1c2632 900px,#1d2733 1010px)"></div>
<div class="a" style="left:0;top:728px;width:1024px;height:40px;background:linear-gradient(180deg,rgba(30,42,58,.9) 0,rgba(30,42,58,.9) 1px,rgba(140,158,180,.8) 1px,rgba(140,158,180,.8) 2px,rgba(255,255,255,.02) 2px,rgba(255,255,255,0) 50%,rgba(0,0,0,.05) 100%)"></div>
<div class="a" style="left:8.5px;top:730px;width:37.5px;height:37.5px;border-radius:50%;background:radial-gradient(circle at 50% 92%,#58d0f8 0,#2f9ad8 22%,#2468a8 48%,#244e80 72%,#2a4870 100%);box-shadow:0 0 0 1px rgba(170,205,230,.65),0 0 4px rgba(120,180,230,.45)"></div>
<svg style="left:15px;top:735.5px" width="25" height="25" viewBox="0 0 25 25"><path d="M1.5 5 C5 2.6 8.5 3.2 11.2 5 L9.8 11.6 C7.2 10 4.3 9.7 0.4 11.4Z" fill="#ea5a32"/><path d="M12.8 5.6 C15.8 7.2 19.4 7.4 23.5 4.8 L22 11.4 C18.2 13.8 14.6 13.5 11.4 12.1Z" fill="#86c832"/><path d="M0.2 13 C4 11.3 7 11.8 9.5 13.3 L8.1 19.8 C5.4 18.2 2.5 18 -1.3 19.6Z" fill="#36a0ea"/><path d="M11.1 13.9 C14.3 15.4 17.8 15.6 21.7 13.2 L20.3 19.6 C16.4 22 12.9 21.7 9.7 20.3Z" fill="#f8c832"/></svg>
<div class="a" style="left:11px;top:731px;width:32.5px;height:15px;border-radius:16px 16px 0 0/15px 15px 0 0;background:linear-gradient(180deg,rgba(255,255,255,.42),rgba(255,255,255,.04))"></div>
<svg style="left:68px;top:733px" width="32" height="31" viewBox="0 0 32 31"><circle cx="22.5" cy="9.5" r="8" fill="#2f86e6"/><circle cx="22.5" cy="9.5" r="8" fill="none" stroke="#1a2030" stroke-width="1.2"/><circle cx="22" cy="22" r="8" fill="#e8403a" stroke="#1a2030" stroke-width="1.2"/><circle cx="9.5" cy="22" r="8" fill="#f6bf26" stroke="#1a2030" stroke-width="1.2"/><circle cx="10" cy="9.5" r="8.3" fill="#86c81e" stroke="#1a2030" stroke-width="1.2"/><circle cx="8.5" cy="7" r="4" fill="#b4e24a" opacity=".7"/><circle cx="24" cy="7" r="3.6" fill="#7ab8f6" opacity=".7"/><circle cx="8" cy="20" r="3.6" fill="#fbe07a" opacity=".6"/><circle cx="23.5" cy="19.5" r="3.4" fill="#f58a80" opacity=".6"/></svg>
<div class="tbtn" style="left:120px"></div>
<div class="tbtn" style="left:182px"></div>
<div class="tbtn" style="left:244px"></div>
<div class="tbtn" style="left:306px;background:linear-gradient(180deg,#c6ccd4 0,#abb3bd 45%,#99a2ad 55%,#b0b8c2 100%);border-color:#e8ecf0"></div>
<svg style="left:135px;top:736px" width="28" height="26" viewBox="0 0 28 26"><g transform="rotate(-27 14 13) translate(14 13) scale(1.14) translate(-14 -13)"><rect x="4.5" y="4" width="19" height="18" rx="1.5" fill="#1e2a22" stroke="#c9d0d4" stroke-width="2"/><rect x="8.5" y="7.5" width="11" height="11" fill="#3a5232"/><path d="M11 9.5 H16 V12.5 H12.5 M16 12.5 V16 H11" fill="none" stroke="#9ab87a" stroke-width="1.6"/></g></svg>
<div class="a" style="left:195.5px;top:732px;width:29px;height:29px;background:linear-gradient(180deg,#3a6fe0,#2b56c8)"></div>
<svg style="left:257px;top:735px" width="32" height="28" viewBox="0 0 32 28"><g transform="rotate(-27 14 13) translate(14 13) scale(1.14) translate(-14 -13)"><rect x="4.5" y="4" width="19" height="18" rx="1.5" fill="#1e2a22" stroke="#c9d0d4" stroke-width="2"/><rect x="8.5" y="7.5" width="11" height="11" fill="#3a5232"/><path d="M11 9.5 H16 V12.5 H12.5 M16 12.5 V16 H11" fill="none" stroke="#9ab87a" stroke-width="1.6"/></g><circle cx="25" cy="20.5" r="5.2" fill="#e0322a" stroke="#f4d0c8" stroke-width=".8"/><circle cx="23.8" cy="19" r="2" fill="#f28a80"/></svg>
<svg style="left:319.5px;top:731px" width="32" height="32" viewBox="0 0 32 32"><defs><linearGradient id="eg" x1="0" y1="0" x2="0" y2="1"><stop offset="0" stop-color="#b49ccc"/><stop offset=".12" stop-color="#74489a"/><stop offset=".40" stop-color="#45205f"/><stop offset=".62" stop-color="#7d5a9c"/><stop offset=".85" stop-color="#b494cc"/><stop offset="1" stop-color="#6c4a8a"/></linearGradient></defs><circle cx="16" cy="16" r="15.4" fill="url(#eg)" stroke="#cdbfdc" stroke-width="1"/><rect x="1.2" y="12.9" width="29.6" height="1.5" fill="#ecd2f4"/><rect x="0.9" y="15.6" width="30.2" height="1.5" fill="#ecd2f4"/><rect x="1.2" y="18.3" width="29.6" height="1.5" fill="#e4c8ee"/><ellipse cx="17" cy="26.5" rx="6.5" ry="3.8" fill="#f2e2fa" opacity=".6"/><path d="M4 10 A13 13 0 0 1 28 10" fill="none" stroke="#fff" stroke-opacity=".25" stroke-width="1.2"/></svg>
<div class="a" style="left:930px;top:746px;width:84px;height:26px;border-radius:14px;background:rgba(120,138,155,.45);filter:blur(6px)"></div>
<svg style="left:874px;top:737px" width="15" height="15" viewBox="0 0 15 15"><rect x="1" y="1" width="12" height="11" fill="#e8ecf2" stroke="#fff" stroke-width="1.4"/><rect x="3" y="3" width="8" height="7" fill="#4a6a9a"/></svg>
<div class="a" style="left:897.5px;top:738px;width:14px;height:14px;border-radius:7px;background:radial-gradient(circle at 50% 35%,#7a78d8,#2f2c9a);box-shadow:0 0 0 1px #b8b8e8"></div>
<svg style="left:921px;top:735px" width="14" height="20" viewBox="0 0 14 20"><path d="M2 1 V19" stroke="#e8ecf2" stroke-width="1.6"/><path d="M2 2 H11 V9 H2Z" fill="#fff"/><path d="M5 12 L8 16 L11 12Z" fill="#e8ecf2"/></svg>
<div class="a" style="left:960px;top:741px;width:17px;height:17px;border-radius:9px;background:radial-gradient(circle at 45% 35%,#c8ea50,#7fb41a)"></div>
<div class="a" style="left:967.5px;top:744px;width:2px;height:9px;background:#2c4a10"></div><div class="a" style="left:964px;top:748px;width:9px;height:2px;background:#2c4a10"></div>
<svg style="left:988px;top:747px" width="14" height="11" viewBox="0 0 14 11"><rect x="0.6" y="0.6" width="12.8" height="9.8" fill="#f4e6a0" stroke="#c9a63a" stroke-width="1"/><path d="M0.6 0.6 L7 6 L13.4 0.6" fill="none" stroke="#c9a63a" stroke-width="1"/></svg>
<div class="a" style="left:1010px;top:729px;width:14px;height:39px;box-sizing:border-box;border-left:1px solid rgba(190,205,225,.6);background:linear-gradient(180deg,rgba(170,185,205,.5),rgba(110,128,150,.4))"></div>
<!-- text -->
<span class="t" style="left:20px;top:2.5px;font-size:13px;letter-spacing:-0.11px;color:#0a0a10;">Java - J2SEPro/src/com/java1234/chap03/sec10/JiangShi.java - Eclipse</span>
<span class="t" style="left:7.5px;top:24.0px;font-size:13px;letter-spacing:-0.74px;color:#0c0c14;">File</span>
<span class="t" style="left:40.5px;top:24.0px;font-size:13px;letter-spacing:-0.23px;color:#0c0c14;">Edit</span>
<span class="t" style="left:76px;top:24.0px;font-size:13px;letter-spacing:-0.28px;color:#0c0c14;">Source</span>
<span class="t" style="left:130.5px;top:24.0px;font-size:13px;letter-spacing:-0.08px;color:#0c0c14;">Refactor</span>
<span class="t" style="left:193.5px;top:24.0px;font-size:13px;letter-spacing:0.02px;color:#0c0c14;">Navigate</span>
<span class="t" style="left:259px;top:24.0px;font-size:13px;letter-spacing:-0.37px;color:#0c0c14;">Search</span>
<span class="t" style="left:312px;top:24.0px;font-size:13px;letter-spacing:-0.07px;color:#0c0c14;">Project</span>
<span class="t" style="left:366px;top:24.0px;font-size:13px;letter-spacing:-0.62px;color:#0c0c14;">Run</span>
<span class="t" style="left:402px;top:24.0px;font-size:13px;letter-spacing:0.12px;color:#0c0c14;">Window</span>
<span class="t" style="left:463px;top:24.0px;font-size:13px;letter-spacing:0.06px;color:#0c0c14;">Help</span>
<span class="t" style="left:778px;top:50.5px;font-size:13.5px;letter-spacing:-0.54px;color:#6b6b6b;">Quick Access</span>
<span class="t" style="left:985.5px;top:51.0px;font-size:13px;letter-spacing:-1.12px;color:#0c0c14;">Java</span>
<span class="t" style="left:30.5px;top:85.5px;font-size:12.5px;letter-spacing:-0.64px;color:#14141c;">Package Explorer</span>
<span class="t" style="left:55.5px;top:132.0px;font-size:12.5px;letter-spacing:-0.66px;color:#14141c;width:151.0px;overflow:hidden;">J2SEPro</span>
<span class="t" style="left:74.5px;top:152.0px;font-size:12.5px;letter-spacing:0.01px;color:#14141c;width:132.0px;overflow:hidden;">src</span>
<span class="t" style="left:94px;top:172.0px;font-size:12.5px;letter-spacing:0.01px;color:#14141c;width:112.5px;overflow:hidden;">com.java1234</span>
<span class="t" style="left:113px;top:192.0px;font-size:12.5px;letter-spacing:-0.07px;color:#14141c;width:93.5px;overflow:hidden;">chap02</span>
<span class="t" style="left:113px;top:212.0px;font-size:12.5px;letter-spacing:-0.07px;color:#14141c;width:93.5px;overflow:hidden;">chap03</span>
<span class="t" style="left:131.5px;top:232.0px;font-size:12.5px;letter-spacing:-0.27px;color:#14141c;width:75.0px;overflow:hidden;">sec02</span>
<span class="t" style="left:131.5px;top:252.0px;font-size:12.5px;letter-spacing:-0.27px;color:#14141c;width:75.0px;overflow:hidden;">sec03</span>
<span class="t" style="left:131.5px;top:272.0px;font-size:12.5px;letter-spacing:-0.27px;color:#14141c;width:75.0px;overflow:hidden;">sec04</span>
<span class="t" style="left:131.5px;top:292.0px;font-size:12.5px;letter-spacing:-0.27px;color:#14141c;width:75.0px;overflow:hidden;">sec05</span>
<span class="t" style="left:131.5px;top:312.0px;font-size:12.5px;letter-spacing:-0.27px;color:#14141c;width:75.0px;overflow:hidden;">sec06</span>
<span class="t" style="left:131.5px;top:332.0px;font-size:12.5px;letter-spacing:-0.27px;color:#14141c;width:75.0px;overflow:hidden;">sec07</span>
<span class="t" style="left:131.5px;top:352.0px;font-size:12.5px;letter-spacing:-0.27px;color:#14141c;width:75.0px;overflow:hidden;">sec08</span>
<span class="t" style="left:131.5px;top:372.0px;font-size:12.5px;letter-spacing:-0.27px;color:#14141c;width:75.0px;overflow:hidden;">sec09</span>
<span class="t" style="left:131.5px;top:392.0px;font-size:12.5px;letter-spacing:-0.27px;color:#14141c;width:75.0px;overflow:hidden;">sec10</span>
<span class="t" style="left:150.3px;top:412.0px;font-size:12.5px;letter-spacing:-0.1px;color:#14141c;width:56.2px;overflow:hidden;">JiangShi.java</span>
<span class="t" style="left:150.8px;top:432.0px;font-size:12.5px;letter-spacing:-0.08px;color:#14141c;width:55.7px;overflow:hidden;">Test.java</span>
<span class="t" style="left:74px;top:452.0px;font-size:12.5px;letter-spacing:-0.11px;color:#14141c;width:132.5px;overflow:hidden;">JRE System Library</span>
<span class="t" style="left:188px;top:452.0px;font-size:12.5px;letter-spacing:-0.46px;color:#8f8a6a;width:18.5px;overflow:hidden;">[JavaSE-1.7]</span>
<span class="t" style="left:247.8px;top:85.5px;font-size:12.5px;letter-spacing:-0.63px;color:#14141c;">JiangShi.java</span>
<span class="t" style="left:366.3px;top:85.5px;font-size:12.5px;letter-spacing:-0.57px;color:#14141c;">Test.java</span>
<span class="t" style="left:262px;top:109.8px;font-size:12.6px;line-height:17px;height:17px;color:#7a1c5e;font-family:'Liberation Mono',monospace;-webkit-text-stroke:0.45px #7a1c5e;letter-spacing:0.44px;">package</span>
<span class="t" style="left:326px;top:109.8px;font-size:12.6px;line-height:17px;height:17px;color:#101010;font-family:'Liberation Mono',monospace;letter-spacing:0.44px;">com.java1234.chap03.sec10;</span>
<span class="t" style="left:262px;top:143.8px;font-size:12.6px;line-height:17px;height:17px;color:#7a1c5e;font-family:'Liberation Mono',monospace;-webkit-text-stroke:0.45px #7a1c5e;letter-spacing:0.44px;">public final class</span>
<span class="t" style="left:414px;top:143.8px;font-size:12.6px;line-height:17px;height:17px;color:#101010;font-family:'Liberation Mono',monospace;letter-spacing:0.44px;">JiangShi {</span>
<span class="t" style="left:262px;top:177.8px;font-size:12.6px;line-height:17px;height:17px;color:#101010;font-family:'Liberation Mono',monospace;letter-spacing:0.44px;">}</span>
<span class="t" style="left:1007.5px;top:158.0px;font-size:12.5px;width:6.5px;overflow:hidden;">com.java1234.chap03.sec10</span>
<span class="t" style="left:1007.5px;top:176.0px;font-size:12.5px;width:5px;overflow:hidden;">JiangShi</span>
<span class="t" style="left:249.3px;top:525.5px;font-size:12.5px;letter-spacing:-0.55px;color:#9c9ca4;">Problems</span>
<span class="t" style="left:311.5px;top:525.5px;font-size:11px;color:#a0a0a8;">@</span>
<span class="t" style="left:328.7px;top:525.5px;font-size:12.5px;letter-spacing:-0.79px;color:#9c9ca4;">Javadoc</span>
<span class="t" style="left:400px;top:525.5px;font-size:12.5px;letter-spacing:-0.49px;color:#9c9ca4;">Declaration</span>
<span class="t" style="left:489.3px;top:525.5px;font-size:12.5px;letter-spacing:-0.6px;color:#14141c;">Console</span>
<span class="t" style="left:230.3px;top:548.5px;font-size:13px;letter-spacing:0.12px;color:#14141c;">No consoles to display at this time.</span>
<span class="t" style="left:449.7px;top:705.1px;font-size:13px;letter-spacing:0.11px;color:#14141c;">Writable</span>
<span class="t" style="left:553.6px;top:705.1px;font-size:13px;letter-spacing:-0.03px;color:#14141c;">Smart Insert</span>
<span class="t" style="left:652px;top:705.1px;font-size:13px;letter-spacing:-0.37px;color:#14141c;">3 : 13</span>
<span class="t" style="left:699px;top:691.5px;font-size:10px;letter-spacing:-0.21px;color:#2d6a12;">45%</span>
<span class="t" style="left:744.3px;top:684.5px;font-size:10.5px;letter-spacing:-0.64px;color:#1c1c1c;">0.1K/S</span>
<span class="t" style="left:744.3px;top:699.7px;font-size:10.5px;letter-spacing:-0.64px;color:#1c1c1c;">7.3K/S</span>
<span class="t" style="left:900.5px;top:695.0px;font-size:13px;color:#3d4f66;font-weight:bold;">英</span>
<span class="t" style="left:201.6px;top:731.8px;font-size:28px;line-height:30px;height:30px;color:#fff;font-weight:bold;transform:scaleX(.67);transform-origin:0 50%;">W</span>
<span class="t" style="left:901.5px;top:737.0px;font-size:11px;color:#fff;font-weight:bold;">?</span>
<svg style="left:340px;top:113px" width="8" height="16" viewBox="0 0 8 16"><path d="M0.5 0.8 C2.5 0.8 3.6 1.2 4 2.4 C4.4 1.2 5.5 0.8 7.5 0.8 M0.5 15.2 C2.5 15.2 3.6 14.8 4 13.6 C4.4 14.8 5.5 15.2 7.5 15.2 M4 2.4 V13.6 M2.5 8 H5.5" fill="none" stroke="#111" stroke-width="1"/></svg>
<span class="t" style="left:826.5px;top:732px;line-height:24px;height:24px;font-family:&quot;Liberation Serif&quot;,serif;font-style:italic;font-weight:bold;font-size:21px;color:#e3121a;letter-spacing:1.05px;text-shadow:0 0 1px rgba(120,0,0,.6)">www.java1234.com</span>
</body>
</html>
